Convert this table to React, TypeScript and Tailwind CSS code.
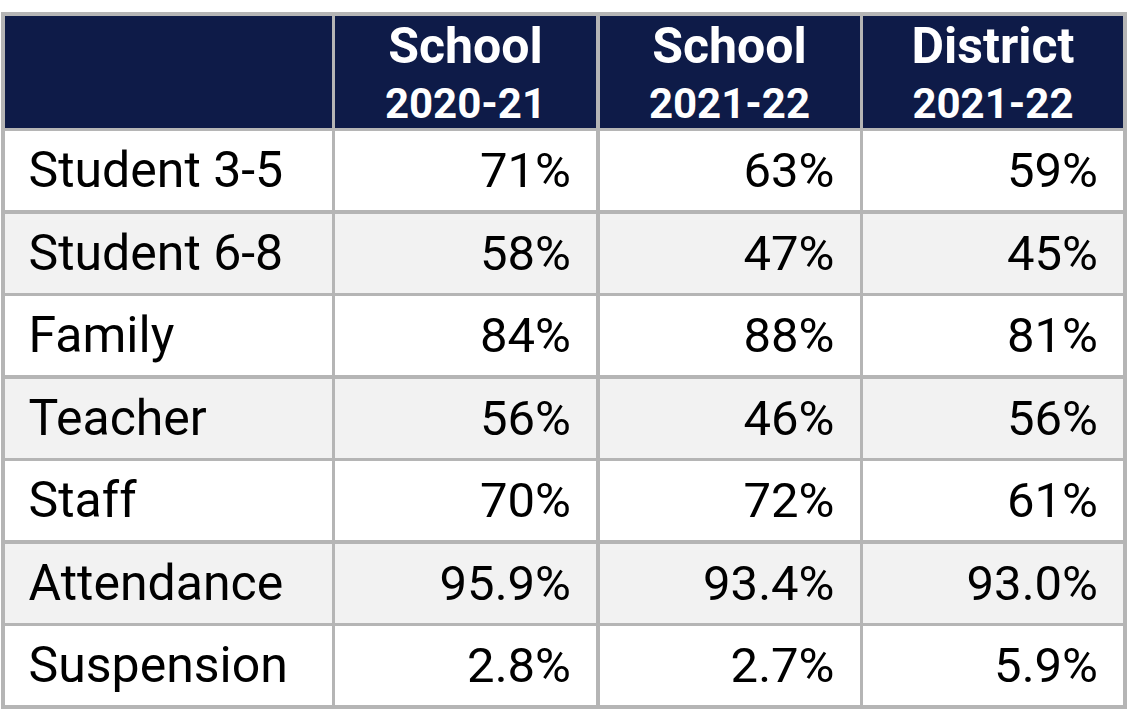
const rows = [
  { label: "Student 3-5", a: "71%", b: "63%", c: "59%" },
  { label: "Student 6-8", a: "58%", b: "47%", c: "45%" },
  { label: "Family", a: "84%", b: "88%", c: "81%" },
  { label: "Teacher", a: "56%", b: "46%", c: "56%" },
  { label: "Staff", a: "70%", b: "72%", c: "61%" },
  { label: "Attendance", a: "95.9%", b: "93.4%", c: "93.0%" },
  { label: "Suspension", a: "2.8%", b: "2.7%", c: "5.9%" },
];

const heads = [
  { top: "School", year: "2020-21" },
  { top: "School", year: "2021-22" },
  { top: "District", year: "2021-22" },
];

export default function App() {
  return (
    <div className="w-[1130px] h-[727px] bg-white pt-3 pl-px font-['Roboto',sans-serif]">
      <div className="w-[1126px] bg-[#b5b5b5] p-[3.5px] grid grid-cols-[327px_261px_260px_260px] grid-rows-[112px_repeat(7,79px)] gap-[3.5px]">
        <div className="bg-[#0e1b48]" />
        {heads.map((h, i) => (
          <div key={i} className="bg-[#0e1b48] text-white font-bold text-center">
            <div className="text-[50px] leading-[61px]">{h.top}</div>
            <div className="text-[42px] leading-[54px]">{h.year}</div>
          </div>
        ))}
        {rows.map((r, i) => {
          const bg = i % 2 === 1 ? "bg-[#f2f2f2]" : "bg-white";
          return [
            <div key={r.label} className={`${bg} text-black text-[50px] leading-[79px] pl-[24px]`}>
              {r.label}
            </div>,
            ...[r.a, r.b, r.c].map((v, j) => (
              <div key={r.label + j} className={`${bg} text-black text-[49px] leading-[79px] text-right pr-[25px]`}>
                {v}
              </div>
            )),
          ];
        })}
      </div>
    </div>
  );
}
